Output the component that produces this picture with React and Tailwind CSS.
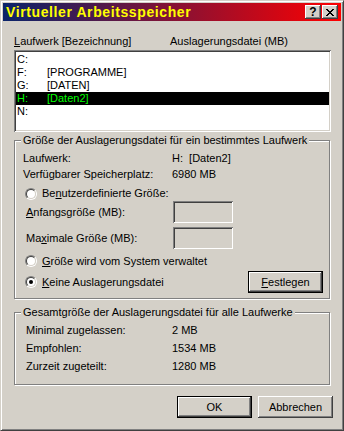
import React from 'react';

// classic 3D edges
const raised =
  'shadow-[inset_-1px_-1px_0_#404040,inset_1px_1px_0_#ffffff,inset_-2px_-2px_0_#808080,inset_2px_2px_0_#d4d0c8]';
const sunken =
  'shadow-[inset_1px_1px_0_#808080,inset_-1px_-1px_0_#ffffff,inset_2px_2px_0_#404040,inset_-2px_-2px_0_#d4d0c8]';

const drives = [
  { letter: 'C:', name: '' },
  { letter: 'F:', name: '[PROGRAMME]' },
  { letter: 'G:', name: '[DATEN]' },
  { letter: 'H:', name: '[Daten2]', selected: true },
  { letter: 'N:', name: '' },
];

const Radio = ({ checked, children }) => (
  <label className="flex items-center">
    <span className="flex w-3 h-3 rounded-full border border-t-[#808080] border-l-[#808080] border-r-white border-b-white">
      <span className="flex flex-1 items-center justify-center rounded-full border border-t-[#404040] border-l-[#404040] border-r-[#d4d0c8] border-b-[#d4d0c8] bg-white">
        {checked && <span className="w-1 h-1 rounded-full bg-black" />}
      </span>
    </span>
    <span className="ml-[5px]">{children}</span>
  </label>
);

const Button = ({ primary, children }) => (
  <button className={`w-[75px] h-[22px] bg-[#d4d0c8] ${primary ? 'border border-black' : ''}`}>
    <span className={`flex w-full h-full items-center justify-center ${raised}`}>{children}</span>
  </button>
);

const Group = ({ title, className, children }) => (
  <fieldset
    className={`mr-px border border-[#808080] shadow-[inset_1px_1px_0_#ffffff,1px_1px_0_#ffffff] px-[6px] ${className}`}
  >
    <legend className="px-[2px] leading-[13px] bg-[#d4d0c8]">{title}</legend>
    {children}
  </fieldset>
);

const Field = () => <span className={`block w-[60px] h-[22px] bg-[#d4d0c8] ${sunken}`} />;

export default function App() {
  return (
    <div className="w-[344px] h-[431px] bg-[#d4d0c8] border border-t-[#d4d0c8] border-l-[#d4d0c8] border-r-[#404040] border-b-[#404040] shadow-[inset_1px_1px_0_#ffffff,inset_-1px_-1px_0_#808080] p-[2px] font-['Liberation_Sans',Arial,sans-serif] text-[11px] leading-[13px] text-black">
      {/* Title bar */}
      <div className="flex h-[18px] items-center bg-[linear-gradient(to_right,#0a246a,#ff0000)] pl-[3px] pr-[3px]">
        <span className="flex-1 text-[14px] leading-[18px] font-bold tracking-[0.6px] text-[#ffff00]">
          Virtueller Arbeitsspeicher
        </span>
        <div className="flex gap-px">
          <span className={`flex w-4 h-[14px] items-center justify-center bg-[#d4d0c8] text-[12px] font-bold leading-none ${raised}`}>
            ?
          </span>
          <span className={`flex w-4 h-[14px] items-center justify-center bg-[#d4d0c8] ${raised}`}>
            <svg width="8" height="7" viewBox="0 0 8 7" shapeRendering="crispEdges">
              <path
                d="M0 0h2v1H0zM6 0h2v1H6zM1 1h2v1H1zM5 1h2v1H5zM2 2h4v1H2zM3 3h2v1H3zM2 4h4v1H2zM1 5h2v1H1zM5 5h2v1H5zM0 6h2v1H0zM6 6h2v1H6z"
                fill="#000"
              />
            </svg>
          </span>
        </div>
      </div>

      <div className="pl-[11px] pr-[10px]">
        {/* Drive list */}
        <div className="mt-[14px] flex">
          <span className="w-[156px]">
            <u>L</u>aufwerk [Bezeichnung]
          </span>
          <span>Auslagerungsdatei (MB)</span>
        </div>
        <div className={`mt-[2px] h-[82px] bg-white px-[2px] pt-[3px] ${sunken}`}>
          {drives.map((d) => (
            <div
              key={d.letter}
              className={`flex h-[13px] pl-px ${d.selected ? 'bg-black text-[#00ff00]' : ''}`}
            >
              <span className="w-[30px]">{d.letter}</span>
              <span>{d.name}</span>
            </div>
          ))}
        </div>

        {/* Selected drive */}
        <Group title="Größe der Auslagerungsdatei für ein bestimmtes Laufwerk" className="mt-[2px] pt-[3px] pb-[5px]">
          <div className="ml-[2px] flex h-4 items-center">
            <span className="w-[149px]">Laufwerk:</span>
            <span className="whitespace-pre">H:  [Daten2]</span>
          </div>
          <div className="ml-[2px] flex h-4 items-center">
            <span className="w-[149px]">Verfügbarer Speicherplatz:</span>
            <span>6980 MB</span>
          </div>
          <div className="mt-[4px] ml-[4px] flex h-[15px] items-center">
            <Radio>
              Be<u>n</u>utzerdefinierte Größe:
            </Radio>
          </div>
          <div className="ml-[5px] flex h-[22px] items-center">
            <span className="w-[147px]">
              <u>A</u>nfangsgröße (MB):
            </span>
            <Field />
          </div>
          <div className="mt-[4px] ml-[5px] flex h-[22px] items-center">
            <span className="w-[147px]">
              Ma<u>x</u>imale Größe (MB):
            </span>
            <Field />
          </div>
          <div className="mt-[4px] ml-[4px] flex h-4 items-center">
            <Radio>
              <u>G</u>röße wird vom System verwaltet
            </Radio>
          </div>
          <div className="mt-[2px] flex items-center justify-between">
            <div className="ml-[4px]">
              <Radio checked>
                <u>K</u>eine Auslagerungsdatei
              </Radio>
            </div>
            <Button primary>
              <u>F</u>estlegen
            </Button>
          </div>
        </Group>

        {/* Totals */}
        <Group title="Gesamtgröße der Auslagerungsdatei für alle Laufwerke" className="mt-[7px] pt-[2px] pb-[9px]">
          {[
            ['Minimal zugelassen:', '2 MB'],
            ['Empfohlen:', '1534 MB'],
            ['Zurzeit zugeteilt:', '1280 MB'],
          ].map(([label, value]) => (
            <div key={label} className="ml-[5px] flex h-[18px] items-center">
              <span className="w-[146px]">{label}</span>
              <span>{value}</span>
            </div>
          ))}
        </Group>

        {/* Dialog buttons */}
        <div className="mt-[11px] -mr-[2px] flex justify-end gap-[6px]">
          <Button primary>OK</Button>
          <Button>Abbrechen</Button>
        </div>
      </div>
    </div>
  );
}
